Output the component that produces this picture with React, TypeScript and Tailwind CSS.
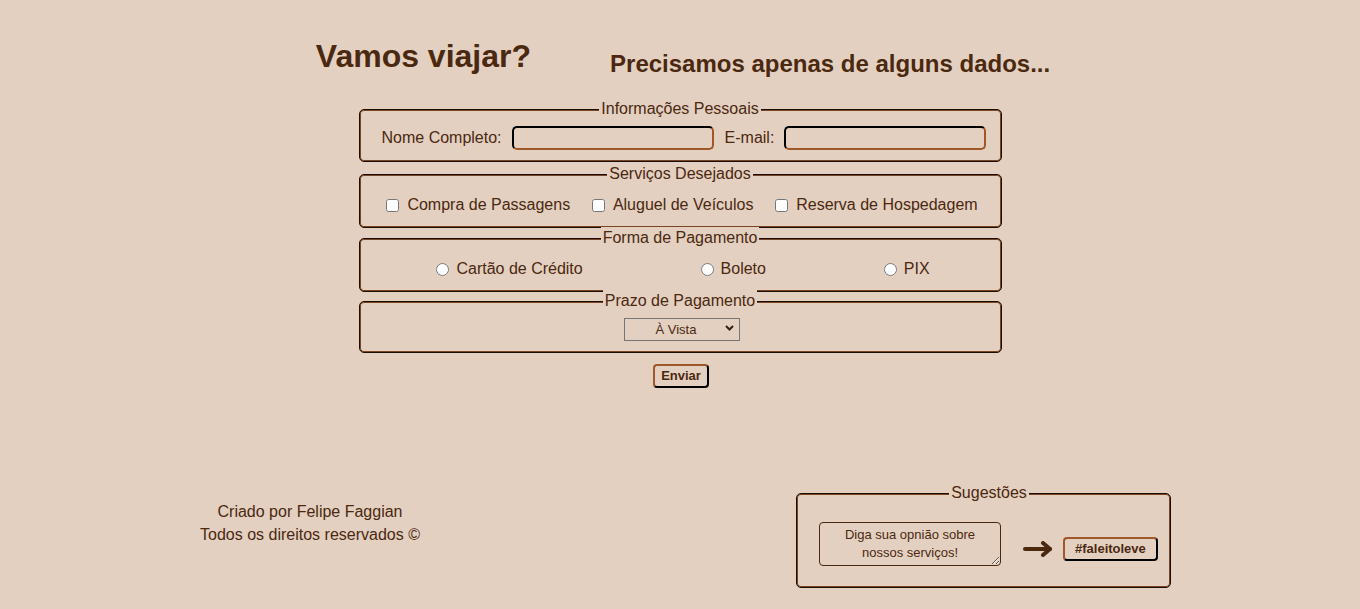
import React from "react";

const FONT = { fontFamily: '"Comic Sans MS", "Liberation Sans", Arial, sans-serif' };

function Fieldset({ title, children, className = "" }: { title: string; children: React.ReactNode; className?: string }) {
  return (
    <fieldset
      className={`border border-[#1a0d04] rounded-[5px] shadow-[inset_0_0_0_1px_#7a4520] ${className}`}
    >
      {/* @ts-ignore */}
      <legend align="center" className="mx-auto px-[2px] leading-[22px] bg-[#e3d0c0]">
        {title}
      </legend>
      {children}
    </fieldset>
  );
}

export default function App() {
  return (
    <div style={FONT} className="w-[1360px] h-[609px] overflow-hidden bg-[#e3d0c0] text-[#4b2810] text-[16px]">
      <header className="flex justify-center items-start gap-[79px] pl-[6px]">
        <h1 className="mt-[38px] text-[32px] font-bold leading-[37px]">Vamos viajar?</h1>
        <h2 className="mt-[50px] text-[24px] font-bold leading-[28px]">Precisamos apenas de alguns dados...</h2>
      </header>

      <form className="w-[643px] mx-auto mt-[20px] flex flex-col" onSubmit={(e) => e.preventDefault()}>
        <Fieldset title="Informações Pessoais" className="px-[12px] pt-[6px] pb-[11px]">
          <div className="flex items-center h-[24px] pl-[10px]">
            <label className="mr-[10px]">Nome Completo:</label>
            <input className="w-[202px] h-[24px] border-2 rounded-[5px] border-t-black border-l-black border-r-[#a0582a] border-b-[#a0582a]" />
            <label className="ml-[11px] mr-[10px]">E-mail:</label>
            <input className="w-[202px] h-[24px] border-2 rounded-[5px] border-t-black border-l-black border-r-[#a0582a] border-b-[#a0582a]" />
          </div>
        </Fieldset>

        <Fieldset title="Serviços Desejados" className="mt-[1px] px-[12px] pt-[9px] pb-[11px]">
          <div className="flex justify-around items-center h-[22px] pl-[4px]">
            {["Compra de Passagens", "Aluguel de Veículos", "Reserva de Hospedagem"].map((t) => (
              <label key={t} className="flex items-center gap-[8px]">
                <input type="checkbox" className="w-[13px] h-[13px]" />
                <span>{t}</span>
              </label>
            ))}
          </div>
        </Fieldset>

        <Fieldset title="Forma de Pagamento" className="-mt-[1px] px-[12px] pt-[9px] pb-[11px]">
          <div className="flex justify-around items-center h-[22px] pl-[6px]">
            {["Cartão de Crédito", "Boleto", "PIX"].map((t) => (
              <label key={t} className="flex items-center gap-[7px]">
                <input type="radio" name="pag" className="w-[13px] h-[13px]" />
                <span>{t}</span>
              </label>
            ))}
          </div>
        </Fieldset>

        <Fieldset title="Prazo de Pagamento" className="-mt-[2px] px-[12px] pt-[5px] pb-[12px]">
          <div className="flex justify-center pl-[4px]">
            <div className="relative w-[116px] h-[23px]">
              <select className="appearance-none w-full h-full border border-[#767676] bg-transparent text-[13px] text-center [text-align-last:center] pl-0 pr-[12px] text-[#4b2810]">
                <option>À Vista</option>
                <option>2x</option>
                <option>3x</option>
              </select>
              <svg className="absolute right-[6px] top-[8px] pointer-events-none" width="9" height="6" viewBox="0 0 9 6">
                <path d="M1 1 L4.5 4.5 L8 1" fill="none" stroke="#3a2010" strokeWidth="2" />
              </svg>
            </div>
          </div>
        </Fieldset>

        <div className="flex justify-center mt-[11px] pl-[2px]">
          <button className="h-[24px] px-[6px] text-[13px] font-bold leading-[16px] border-2 rounded-[4px] border-t-[#a0582a] border-l-[#a0582a] border-r-black border-b-black">
            Enviar
          </button>
        </div>
      </form>

      <footer className="flex items-start mt-[94px]">
        <div className="ml-[193px] w-[234px] mt-[18px] text-center leading-[23px]">
          <p>Criado por Felipe Faggian</p>
          <p>Todos os direitos reservados ©</p>
        </div>
        <Fieldset title="Sugestões" className="ml-[369px] w-[375px] pl-[22px] pr-[11px] pt-[18px] pb-[21px]">
          <div className="flex items-start">
            <textarea
              className="w-[182px] h-[44px] border border-[#4b2810] rounded-[4px] text-[13px] text-center leading-[18px] pt-[3px] px-[4px] placeholder:text-[#4b2810]"
              placeholder="Diga sua opnião sobre nossos serviços!"
            />
            <svg className="ml-[22px] mt-[19px]" width="30" height="16" viewBox="0 0 30 16">
              <path d="M2 8 H27" stroke="#4b2810" strokeWidth="4" strokeLinecap="round" />
              <path d="M20 2 L27 8 L20 14" fill="none" stroke="#4b2810" strokeWidth="4" strokeLinecap="round" strokeLinejoin="round" />
            </svg>
            <button type="button" className="ml-[10px] mt-[15px] h-[24px] px-[10px] text-[13px] font-bold leading-[16px] border-2 rounded-[4px] border-t-[#a0582a] border-l-[#a0582a] border-r-black border-b-black">
              #faleitoleve
            </button>
          </div>
        </Fieldset>
      </footer>
    </div>
  );
}
